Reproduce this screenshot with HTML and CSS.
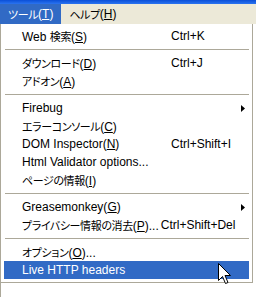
FILE: index.html
```html
<!DOCTYPE html>
<html lang="ja">
<head>
    <meta charset="UTF-8">
    <title>ツール</title>
    <link rel="stylesheet" href="styles.css">
</head>
<body>
    <div class="titlebar"></div>
    <div class="menubar">
        <span class="mb-item active"><span class="ja">ツール</span>(<u>T</u>)</span>
        <span class="mb-item"><span class="ja">ヘルプ</span>(<u>H</u>)</span>
    </div>

    <div class="menu">
        <div class="item"><span class="label">Web <span class="ja">検索</span>(<u>S</u>)</span><span class="accel">Ctrl+K</span></div>
        <div class="sep"></div>
        <div class="item"><span class="label"><span class="ja">ダウンロード</span>(<u>D</u>)</span><span class="accel">Ctrl+J</span></div>
        <div class="item"><span class="label"><span class="ja">アドオン</span>(<u>A</u>)</span></div>
        <div class="sep"></div>
        <div class="item"><span class="label">Firebug</span>
            <svg class="arrow" width="4" height="7" viewBox="0 0 4 7"><path d="M0 0 L4 3.5 L0 7 Z" fill="#000"/></svg>
        </div>
        <div class="item"><span class="label"><span class="ja">エラーコンソール</span>(<u>C</u>)</span></div>
        <div class="item"><span class="label">DOM Inspector(<u>N</u>)</span><span class="accel">Ctrl+Shift+I</span></div>
        <div class="item"><span class="label">Html Validator options...</span></div>
        <div class="item"><span class="label"><span class="ja">ページの情報</span>(<u>I</u>)</span></div>
        <div class="sep"></div>
        <div class="item"><span class="label">Greasemonkey(<u>G</u>)</span>
            <svg class="arrow" width="4" height="7" viewBox="0 0 4 7"><path d="M0 0 L4 3.5 L0 7 Z" fill="#000"/></svg>
        </div>
        <div class="item"><span class="label long"><span class="ja">プライバシー情報の消去</span>(<u>P</u>)...</span><span class="accel">Ctrl+Shift+Del</span></div>
        <div class="sep"></div>
        <div class="item"><span class="label"><span class="ja">オプション</span>(<u>O</u>)...</span></div>
        <div class="item selected"><span class="label">Live HTTP headers</span></div>
    </div>
    <div class="below"></div>

    <!-- mouse pointer over the selected item -->
    <svg class="cursor" width="13" height="22" viewBox="0 0 13 22">
        <path d="M0.5 0.5 L0.5 17.5 L4.5 13.5 L7.5 20.5 L10 19.5 L7 12.5 L12.5 12.5 Z" fill="#fff" stroke="#000" stroke-width="1"/>
    </svg>
</body>
</html>
```

FILE: styles.css
```css
body {
    margin: 0;
    width: 256px;
    height: 297px;
    overflow: hidden;
    position: relative;
    background-color: #fff;
    font-family: "Liberation Sans Narrow", "Liberation Sans", "Noto Sans CJK JP", sans-serif;
    font-size: 12px;
    color: #000;
}

.ja {
    font-family: "Noto Sans CJK JP", sans-serif;
    font-size: 11px;
    font-feature-settings: "palt";
    letter-spacing: -0.4px;
}

.titlebar {
    height: 4px;
    background: linear-gradient(#0a4fd8, #2b74f0);
}

.menubar {
    height: 20px;
    display: flex;
    background-color: #ece9d8;
}

.mb-item {
    display: flex;
    align-items: center;
    padding: 0 8px;
}

.mb-item.active {
    background-color: #316ac5;
    color: white;
}

.menu {
    width: 245px;
    padding: 3px;
    border: 1px solid #aca899;
    border-top: none;
    background-color: white;
}

.item {
    height: 18px;
    display: flex;
    align-items: center;
    padding-left: 18px;
    white-space: nowrap;
}

.label {
    min-width: 149px;
}

.label.long {
    min-width: 0;
    margin-right: 2px;
}

.accel {
    flex: none;
}

.arrow {
    margin-left: auto;
    margin-right: 4px;
}

.item.selected {
    background-color: #316ac5;
    color: white;
}

.sep {
    height: 1px;
    margin: 4px 0 4px 1px;
    background-color: #aca899;
}

u {
    text-decoration: underline;
    text-underline-offset: 1px;
}

.below {
    height: 20px;
    border-left: 1px solid #aca899;
}

.cursor {
    position: absolute;
    left: 218px;
    top: 263px;
}
```
